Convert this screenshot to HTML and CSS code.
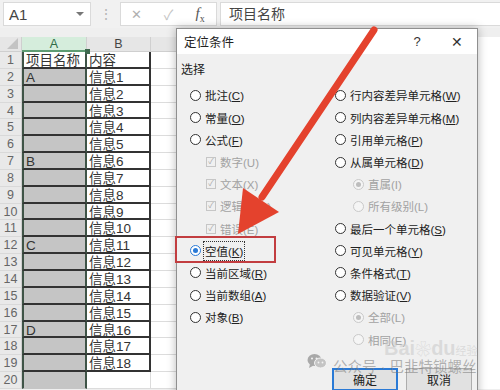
FILE: index.html
```html
<!DOCTYPE html>
<html lang="zh-CN">
<head>
    <meta charset="UTF-8">
    <meta name="viewport" content="width=device-width, initial-scale=1.0">
    <title>定位条件</title>
    <link rel="stylesheet" href="styles.css">
</head>
<body>
    <div class="formula-bar">
        <div class="name-box"><span>A1</span><span class="caret"></span></div>
        <div class="grip">⋮</div>
        <div class="fx-buttons">
            <span class="fx-cancel">✕</span>
            <span class="fx-enter">✓</span>
            <span class="fx-label"><i>f</i><sub>x</sub></span>
        </div>
        <div class="formula-input">项目名称</div>
    </div>

    <div class="sheet"></div>

    <div class="dialog">
        <div class="dialog-title">
            <span class="title-text">定位条件</span>
            <span class="title-help">?</span>
            <span class="title-close">✕</span>
        </div>
        <div class="dialog-body">
            <div class="group-label">选择</div>
            <div class="options">
                <div class="option-column">
                    <div class="option"><span class="radio"></span><span>批注(<u>C</u>)</span></div>
                    <div class="option"><span class="radio"></span><span>常量(<u>O</u>)</span></div>
                    <div class="option"><span class="radio"></span><span>公式(<u>F</u>)</span></div>
                    <div class="option sub disabled"><span class="checkbox">✓</span><span>数字(U)</span></div>
                    <div class="option sub disabled"><span class="checkbox">✓</span><span>文本(X)</span></div>
                    <div class="option sub disabled"><span class="checkbox">✓</span><span>逻辑值(G)</span></div>
                    <div class="option sub disabled"><span class="checkbox">✓</span><span>错误(E)</span></div>
                    <div class="option"><span class="radio checked"></span><span class="focus">空值(<u>K</u>)</span></div>
                    <div class="option"><span class="radio"></span><span>当前区域(<u>R</u>)</span></div>
                    <div class="option"><span class="radio"></span><span>当前数组(<u>A</u>)</span></div>
                    <div class="option"><span class="radio"></span><span>对象(<u>B</u>)</span></div>
                </div>
                <div class="option-column">
                    <div class="option"><span class="radio"></span><span>行内容差异单元格(<u>W</u>)</span></div>
                    <div class="option"><span class="radio"></span><span>列内容差异单元格(<u>M</u>)</span></div>
                    <div class="option"><span class="radio"></span><span>引用单元格(<u>P</u>)</span></div>
                    <div class="option"><span class="radio"></span><span>从属单元格(<u>D</u>)</span></div>
                    <div class="option sub-radio disabled"><span class="radio checked"></span><span>直属(I)</span></div>
                    <div class="option sub-radio disabled"><span class="radio"></span><span>所有级别(L)</span></div>
                    <div class="option"><span class="radio"></span><span>最后一个单元格(<u>S</u>)</span></div>
                    <div class="option"><span class="radio"></span><span>可见单元格(<u>Y</u>)</span></div>
                    <div class="option"><span class="radio"></span><span>条件格式(<u>T</u>)</span></div>
                    <div class="option"><span class="radio"></span><span>数据验证(<u>V</u>)</span></div>
                    <div class="option sub-radio disabled"><span class="radio checked"></span><span>全部(L)</span></div>
                    <div class="option sub-radio disabled"><span class="radio"></span><span>相同(E)</span></div>
                </div>
            </div>
            <div class="dialog-buttons">
                <button type="button" class="btn btn-default">确定</button>
                <button type="button" class="btn">取消</button>
            </div>
        </div>
    </div>

    <div class="highlight-box"></div>

    <div class="baidu-mark">Bai<span class="paw">❀</span>du<small>经验</small></div>
    <div class="watermark">
        <svg class="wechat" width="20" height="17" viewBox="0 0 20 17">
            <ellipse cx="7.5" cy="7" rx="7" ry="6" fill="#a9a9a9"/>
            <path d="M3 11 L2 15 L6.5 12.5 Z" fill="#a9a9a9"/>
            <ellipse cx="13.5" cy="10" rx="6" ry="5" fill="#c4c4c4" stroke="#f4f4f4" stroke-width="1"/>
            <circle cx="5" cy="5.5" r="1" fill="#f4f4f4"/>
            <circle cx="9.5" cy="5.5" r="1" fill="#f4f4f4"/>
            <circle cx="11.5" cy="9.5" r="0.9" fill="#f4f4f4"/>
            <circle cx="15.5" cy="9.5" r="0.9" fill="#f4f4f4"/>
        </svg>
        <span>公众号 · 巴韭特锁螺丝</span>
    </div>

    <svg class="arrow" width="500" height="390" viewBox="0 0 500 390">
        <line x1="374" y1="30" x2="262" y2="197" stroke="#e4422d" stroke-width="7" stroke-linecap="round"/>
        <polygon points="238,234 243,188 279,212" fill="#e4422d"/>
    </svg>

    <script>
        const sheetNode = document.querySelector('.sheet');
        const columns = ['A','B','C','D','E','F','G'];
        const names = {1:'项目名称', 2:'A', 7:'B', 12:'C', 17:'D'};

        function makeCell(className, text){
            const cell = document.createElement('div');
            cell.className = className;
            if(text !== undefined) cell.textContent = text;
            return cell;
        }

        sheetNode.append(makeCell('corner'));
        columns.forEach(col => {
            sheetNode.append(makeCell(col === 'A' ? 'col-head col-head-active' : 'col-head', col));
        });

        for(let row = 1; row <= 20; row++){
            sheetNode.append(makeCell('row-head', row));
            let aClass = row === 1 ? 'cell cell-a cell-active' : 'cell cell-a';
            if(row <= 19) aClass += ' boxed';
            sheetNode.append(makeCell(aClass, names[row]));
            if(row <= 19){
                sheetNode.append(makeCell('cell cell-b boxed', row === 1 ? '内容' : '信息' + (row - 1)));
            }else{
                sheetNode.append(makeCell('cell'));
            }
            for(let i = 2; i < columns.length; i++){
                sheetNode.append(makeCell('cell'));
            }
        }
    </script>
</body>
</html>
```

FILE: styles.css
```css
body {
    margin: 0;
    width: 500px;
    height: 390px;
    overflow: hidden;
    position: relative;
    background: #efefef;
    font-family: "Liberation Sans", "Noto Sans CJK SC", sans-serif;
}

/* formula bar */
.formula-bar {
    height: 28px;
    display: flex;
    align-items: center;
    background: #f1f1f1;
}
.name-box {
    box-sizing: border-box;
    margin-left: 3px;
    width: 88px;
    height: 24px;
    display: flex;
    align-items: center;
    justify-content: space-between;
    padding: 0 6px 0 5px;
    background: white;
    border: 1px solid #dadada;
    color: #444;
    font-size: 15px;
}
.caret {
    width: 0;
    height: 0;
    border-left: 4px solid transparent;
    border-right: 4px solid transparent;
    border-top: 4px solid #777;
}
.grip {
    width: 29px;
    text-align: center;
    color: #b5b5b5;
    font-size: 14px;
}
.fx-buttons {
    box-sizing: border-box;
    width: 97px;
    height: 24px;
    display: flex;
    align-items: center;
    background: white;
    border: 1px solid #dadada;
}
.fx-buttons span {
    width: 32px;
    text-align: center;
}
.fx-cancel {
    color: #b0b0b0;
    font-size: 13px;
}
.fx-enter {
    color: #c4c4c4;
    font-size: 14px;
}
.fx-label {
    color: #555;
    font-family: "Liberation Serif", serif;
    font-size: 15px;
}
.fx-label sub {
    font-size: 10px;
}
.formula-input {
    box-sizing: border-box;
    flex: 1;
    min-width: 0;
    height: 24px;
    margin-left: 3px;
    padding-left: 8px;
    line-height: 23px;
    background: white;
    border: 1px solid #dadada;
    border-right: none;
    color: #444;
    font-size: 14px;
}

/* worksheet */
.sheet {
    margin-top: 9px;
    width: 500px;
    overflow: hidden;
    display: grid;
    grid-template-columns: 22px 65px 64px repeat(5, 64px);
    grid-template-rows: 15px repeat(20, 16.85px);
    background: white;
}
.corner {
    position: relative;
    background: #e6e6e6;
    border-right: 1px solid #cfcfcf;
    border-bottom: 1px solid #cfcfcf;
}
.corner::after {
    content: "";
    position: absolute;
    right: 3px;
    bottom: 2px;
    width: 0;
    height: 0;
    border-left: 11px solid transparent;
    border-bottom: 11px solid #c3c3c3;
}
.col-head {
    box-sizing: border-box;
    background: #e6e6e6;
    border-right: 1px solid #d0d0d0;
    border-bottom: 1px solid #cfcfcf;
    text-align: center;
    line-height: 14px;
    font-size: 12.5px;
    color: #444;
}
.col-head-active {
    background: #d5eddc;
    border-bottom: 2px solid #5e9c73;
    color: #2f6b45;
}
.row-head {
    box-sizing: border-box;
    background: #e9e9e9;
    border-right: 1px solid #cfcfcf;
    border-bottom: 1px solid #d9d9d9;
    text-align: center;
    line-height: 16px;
    font-size: 12.5px;
    color: #666;
}
.cell {
    box-sizing: border-box;
    border-right: 1px solid #dcdcdc;
    border-bottom: 1px solid #dcdcdc;
    padding-left: 2px;
    line-height: 17px;
    font-size: 13.5px;
    color: #333;
    white-space: nowrap;
    overflow: hidden;
}
.cell-a {
    background: #c5c5c5;
    border-left: 2px solid #3f5447;
    border-right: 2px solid #3f5447;
    border-bottom-color: #c5c5c5;
}
.cell-active {
    position: relative;
    overflow: visible;
    background: white;
}
.cell-active::after {
    content: "";
    position: absolute;
    right: -5px;
    top: -3px;
    width: 5px;
    height: 5px;
    background: #3f6a4f;
}
.boxed {
    border-bottom: 2px solid #333;
}
.cell-b.boxed {
    border-right: 2px solid #333;
}

/* dialog */
.dialog {
    position: absolute;
    left: 176px;
    top: 28px;
    width: 302px;
    height: 380px;
    box-sizing: border-box;
    border: 1px solid #8f8f8f;
    background: #f0f0f0;
    box-shadow: 0 0 9px rgba(0, 0, 0, 0.28);
    font-size: 11.5px;
    color: #222;
}
.dialog-title {
    height: 25px;
    display: flex;
    align-items: center;
    background: white;
    font-size: 12.5px;
}
.title-text {
    padding-left: 7px;
    flex: 1;
}
.title-help,
.title-close {
    width: 40px;
    text-align: center;
    color: #333;
}
.title-help {
    font-size: 13px;
}
.title-close {
    font-size: 14px;
}
.dialog-body {
    padding: 8px 5px 0 4px;
}
.group-label {
    line-height: 16px;
    font-size: 12px;
}
.options {
    margin-top: 6.4px;
    margin-left: 9px;
    display: grid;
    grid-template-columns: 145px 1fr;
}
.option {
    height: 22.2px;
    display: flex;
    align-items: center;
    gap: 4px;
    white-space: nowrap;
}
.option u {
    text-decoration-thickness: 1px;
    text-underline-offset: 1px;
}
.radio {
    box-sizing: border-box;
    width: 11px;
    height: 11px;
    border: 1px solid #333;
    border-radius: 50%;
    background: white;
    display: flex;
    align-items: center;
    justify-content: center;
}
.radio.checked {
    border-color: #2a7ad6;
}
.radio.checked::after {
    content: "";
    width: 5px;
    height: 5px;
    border-radius: 50%;
    background: #2a7ad6;
}
.sub {
    padding-left: 16px;
}
.sub-radio {
    padding-left: 18px;
}
.disabled {
    color: #a2a2a2;
}
.disabled .radio {
    border-color: #c9c9c9;
    background: #f5f5f5;
}
.disabled .radio.checked::after {
    background: #bdbdbd;
}
.checkbox {
    box-sizing: border-box;
    width: 10px;
    height: 10px;
    border: 1px solid #c6c6c6;
    font-size: 8px;
    line-height: 8px;
    text-align: center;
    color: #a8a8a8;
    overflow: hidden;
}
.focus {
    outline: 1px dotted #333;
    outline-offset: 1px;
}
.dialog-buttons {
    margin-top: 17px;
    display: flex;
    justify-content: flex-end;
    gap: 8px;
}
.btn {
    width: 66px;
    height: 23px;
    padding: 0;
    font-family: inherit;
    font-size: 12px;
    color: #222;
    background: #e1e1e1;
    border: 1px solid #adadad;
}
.btn-default {
    border: 2px solid #2a7ad6;
}

/* overlays */
.highlight-box {
    position: absolute;
    left: 175px;
    top: 236px;
    width: 101px;
    height: 27px;
    box-sizing: border-box;
    border: 2px solid #c23d40;
}
.arrow {
    position: absolute;
    left: 0;
    top: 0;
    pointer-events: none;
}
.watermark {
    position: absolute;
    left: 307px;
    top: 355px;
    display: flex;
    align-items: center;
    gap: 6px;
    color: rgba(120, 120, 120, 0.55);
    font-size: 14.5px;
}
.wechat {
    margin-top: -8px;
}
.baidu-mark {
    position: absolute;
    left: 384px;
    top: 336px;
    color: rgba(200, 200, 200, 0.55);
    font-size: 20px;
    font-weight: bold;
}
.baidu-mark .paw {
    font-size: 16px;
}
.baidu-mark small {
    font-size: 11px;
    font-weight: normal;
}
```
